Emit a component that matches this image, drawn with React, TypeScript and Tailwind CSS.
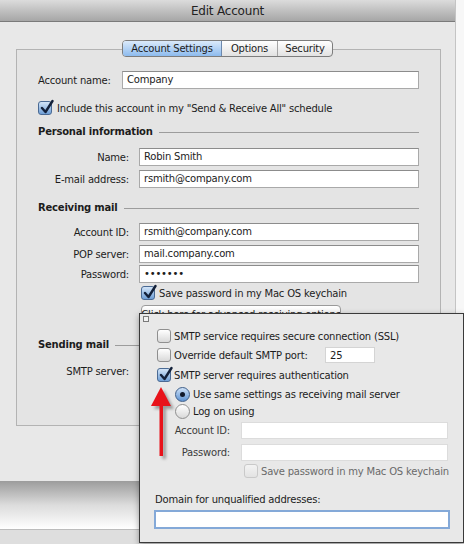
import clsx from "clsx"

function Check(props: { checked?: boolean; disabled?: boolean }) {
	return (
		<span
			className={clsx(
				"relative inline-block w-[14px] h-[14px] rounded-[3px] border shrink-0",
				props.checked
					? "border-[#4a6a94] bg-linear-to-b from-[#d3e5f8] to-[#6f9fd6]"
					: props.disabled
						? "border-[#c9c9c9] bg-linear-to-b from-[#f3f3f3] to-[#e3e3e3]"
						: "border-[#8f8f8f] bg-linear-to-b from-white to-[#d9d9d9]"
			)}
		>
			{props.checked && (
				<svg className="absolute -top-[3px] left-[1px] w-[14px] h-[16px]" viewBox="0 0 14 16">
					<path d="M2 9 L5.5 13 L12.5 2" fill="none" stroke="#13213a" strokeWidth="2.4" strokeLinecap="round" strokeLinejoin="round" />
				</svg>
			)}
		</span>
	)
}

function Radio(props: { selected?: boolean }) {
	return (
		<span
			className={clsx(
				"flex items-center justify-center w-[15px] h-[15px] rounded-full border shrink-0",
				props.selected
					? "border-[#3f5f8a] bg-linear-to-b from-[#cfe2f7] to-[#5e93d2]"
					: "border-[#8f8f8f] bg-linear-to-b from-white to-[#d9d9d9]"
			)}
		>
			{props.selected && <span className="w-[5px] h-[5px] rounded-full bg-[#10192b]"></span>}
		</span>
	)
}

function Field(props: { value?: string; className?: string }) {
	return (
		<div className={clsx("h-[18px] bg-white border border-[#a9a9a9] border-t-[#8c8c8c] px-[4px] flex items-center leading-none", props.className)}>
			{props.value}
		</div>
	)
}

function Heading(props: { title: string }) {
	return (
		<div className="flex items-center h-[13px]">
			<span className="font-bold">{props.title}</span>
			<span className="flex-1 h-px bg-[#9c9c9c] ml-[6px] mt-[2px]"></span>
		</div>
	)
}

function Row(props: { label: string; value?: string; className?: string }) {
	return (
		<div className={clsx("flex items-center", props.className)}>
			<span className="w-[91px] text-right">{props.label}</span>
			<Field value={props.value} className="ml-[10px] flex-1" />
		</div>
	)
}

export default function App() {
	return (
		<div className="relative w-[464px] h-[544px] overflow-hidden bg-[#f7f7f7] font-['DejaVu_Sans',sans-serif] text-[10px] tracking-[-0.2px] text-[#1c1c1c]">
			<div className="w-[456px] h-[481px] bg-[#e8e8e8] flex flex-col border-r border-[#c4c4c4]">
				<div className="h-[22px] shrink-0 bg-linear-to-b from-[#dcdcdc] to-[#a6a6a6] border-b border-[#7a7a7a] flex items-center justify-center text-[12px] text-[#222]">
					Edit Account
				</div>

				<div className="ml-[16px] mt-[27px] w-[425px] h-[377px] border border-[#b3b3b3] bg-[#e4e4e4] flex flex-col pl-[21px] pr-[21px]">
					<div className="self-center -mt-[10px] flex h-[17px] rounded-[4px] border border-[#7d7d7d] overflow-hidden bg-linear-to-b from-white to-[#e2e2e2] -translate-x-[1px]">
						<div className="w-[99px] flex items-center justify-center bg-linear-to-b from-[#dbeafa] to-[#8dbbee] border-r border-[#6d89ad]">Account Settings</div>
						<div className="w-[56px] flex items-center justify-center border-r border-[#a4a4a4]">Options</div>
						<div className="w-[54px] flex items-center justify-center">Security</div>
					</div>

					<div className="flex items-center mt-[14px]">
						<span className="w-[84px]">Account name:</span>
						<Field value="Company" className="flex-1" />
					</div>

					<div className="flex items-center gap-[5px] mt-[12px] h-[14px]">
						<Check checked />
						<span>Include this account in my "Send &amp; Receive All" schedule</span>
					</div>

					<div className="mt-[10px]">
						<Heading title="Personal information" />
					</div>
					<Row label="Name:" value="Robin Smith" className="mt-[10px]" />
					<Row label="E-mail address:" value="rsmith@company.com" className="mt-[4px]" />

					<div className="mt-[13px]">
						<Heading title="Receiving mail" />
					</div>
					<Row label="Account ID:" value="rsmith@company.com" className="mt-[9px]" />
					<Row label="POP server:" value="mail.company.com" className="mt-[4px]" />
					<Row label="Password:" value="•••••••" className="mt-[2px]" />

					<div className="flex items-center gap-[4px] mt-[3px] ml-[103px] h-[14px]">
						<Check checked />
						<span>Save password in my Mac OS keychain</span>
					</div>

					<div className="mt-[5px] ml-[103px] w-[200px] h-[18px] rounded-[4px] border border-[#9a9a9a] bg-linear-to-b from-white to-[#e6e6e6] flex items-center justify-center whitespace-nowrap overflow-hidden">
						Click here for advanced receiving options
					</div>

					<div className="mt-[15px] w-[104px]">
						<Heading title="Sending mail" />
					</div>
					<div className="flex items-center mt-[13px]">
						<span className="w-[91px] text-right">SMTP server:</span>
					</div>
				</div>
			</div>

			<div className="h-[48px] bg-linear-to-b from-[#9c9c9c] via-[#dcdcdc] to-white"></div>
			<div className="h-[15px] border-t border-[#bcbcbc] bg-[#dedede]"></div>

			<div className="absolute left-[139px] top-[313px] w-[325px] h-[230px] border border-[#3a3a3a] bg-[#e8e8e8] shadow-[0_2px_6px_rgba(0,0,0,0.35)] flex flex-col pl-[17px] pt-[15px]">
				<span className="absolute left-[3px] top-[2px] w-[6px] h-[6px] border border-[#7a7a7a] bg-[#f2f2f2]"></span>

				<div className="flex items-center gap-[3px] h-[14px]">
					<Check />
					<span>SMTP service requires secure connection (SSL)</span>
				</div>
				<div className="flex items-center gap-[3px] h-[14px] mt-[5px]">
					<Check />
					<span className="w-[148px]">Override default SMTP port:</span>
					<div className="w-[50px] h-[16px] bg-white border border-[#d4d4d4] flex items-center px-[4px]">25</div>
				</div>
				<div className="flex items-center gap-[3px] h-[14px] mt-[6px]">
					<Check checked />
					<span>SMTP server requires authentication</span>
				</div>

				<div className="flex items-center gap-[3px] ml-[18px] mt-[5px] h-[15px]">
					<Radio selected />
					<span>Use same settings as receiving mail server</span>
				</div>
				<div className="flex items-center gap-[3px] ml-[18px] mt-[2px] h-[15px]">
					<Radio />
					<span>Log on using</span>
				</div>

				<div className="flex items-center mt-[3px] text-[#3c3c3c]">
					<span className="w-[73px] text-right">Account ID:</span>
					<div className="ml-[11px] w-[207px] h-[17px] bg-white border border-[#dcdcdc]"></div>
				</div>
				<div className="flex items-center mt-[5px] text-[#3c3c3c]">
					<span className="w-[73px] text-right">Password:</span>
					<div className="ml-[11px] w-[207px] h-[17px] bg-white border border-[#dcdcdc]"></div>
				</div>
				<div className="flex items-center gap-[3px] ml-[87px] mt-[3px] h-[14px] text-[#6a6a6a]">
					<Check disabled />
					<span>Save password in my Mac OS keychain</span>
				</div>

				<div className="mt-[14px] -ml-[2px]">Domain for unqualified addresses:</div>
				<div className="mt-[3px] -ml-[3px] w-[296px] h-[19px] bg-white border-2 border-[#84a9d8]"></div>
			</div>

			<svg className="absolute left-[150px] top-[385px] w-[28px] h-[80px]" viewBox="0 0 28 80">
				<defs>
					<filter id="blur" x="-50%" y="-50%" width="200%" height="200%">
						<feGaussianBlur stdDeviation="1.5" />
					</filter>
				</defs>
				<g fill="#5a5a5a" opacity="0.55" filter="url(#blur)" transform="translate(3 3)">
					<polygon points="11,2 21,21 1,21" />
					<rect x="9.5" y="19" width="3.5" height="52" />
				</g>
				<g fill="#e8121a">
					<polygon points="11,2 21,21 1,21" />
					<rect x="9.5" y="19" width="3.5" height="52" />
				</g>
			</svg>
		</div>
	)
}
